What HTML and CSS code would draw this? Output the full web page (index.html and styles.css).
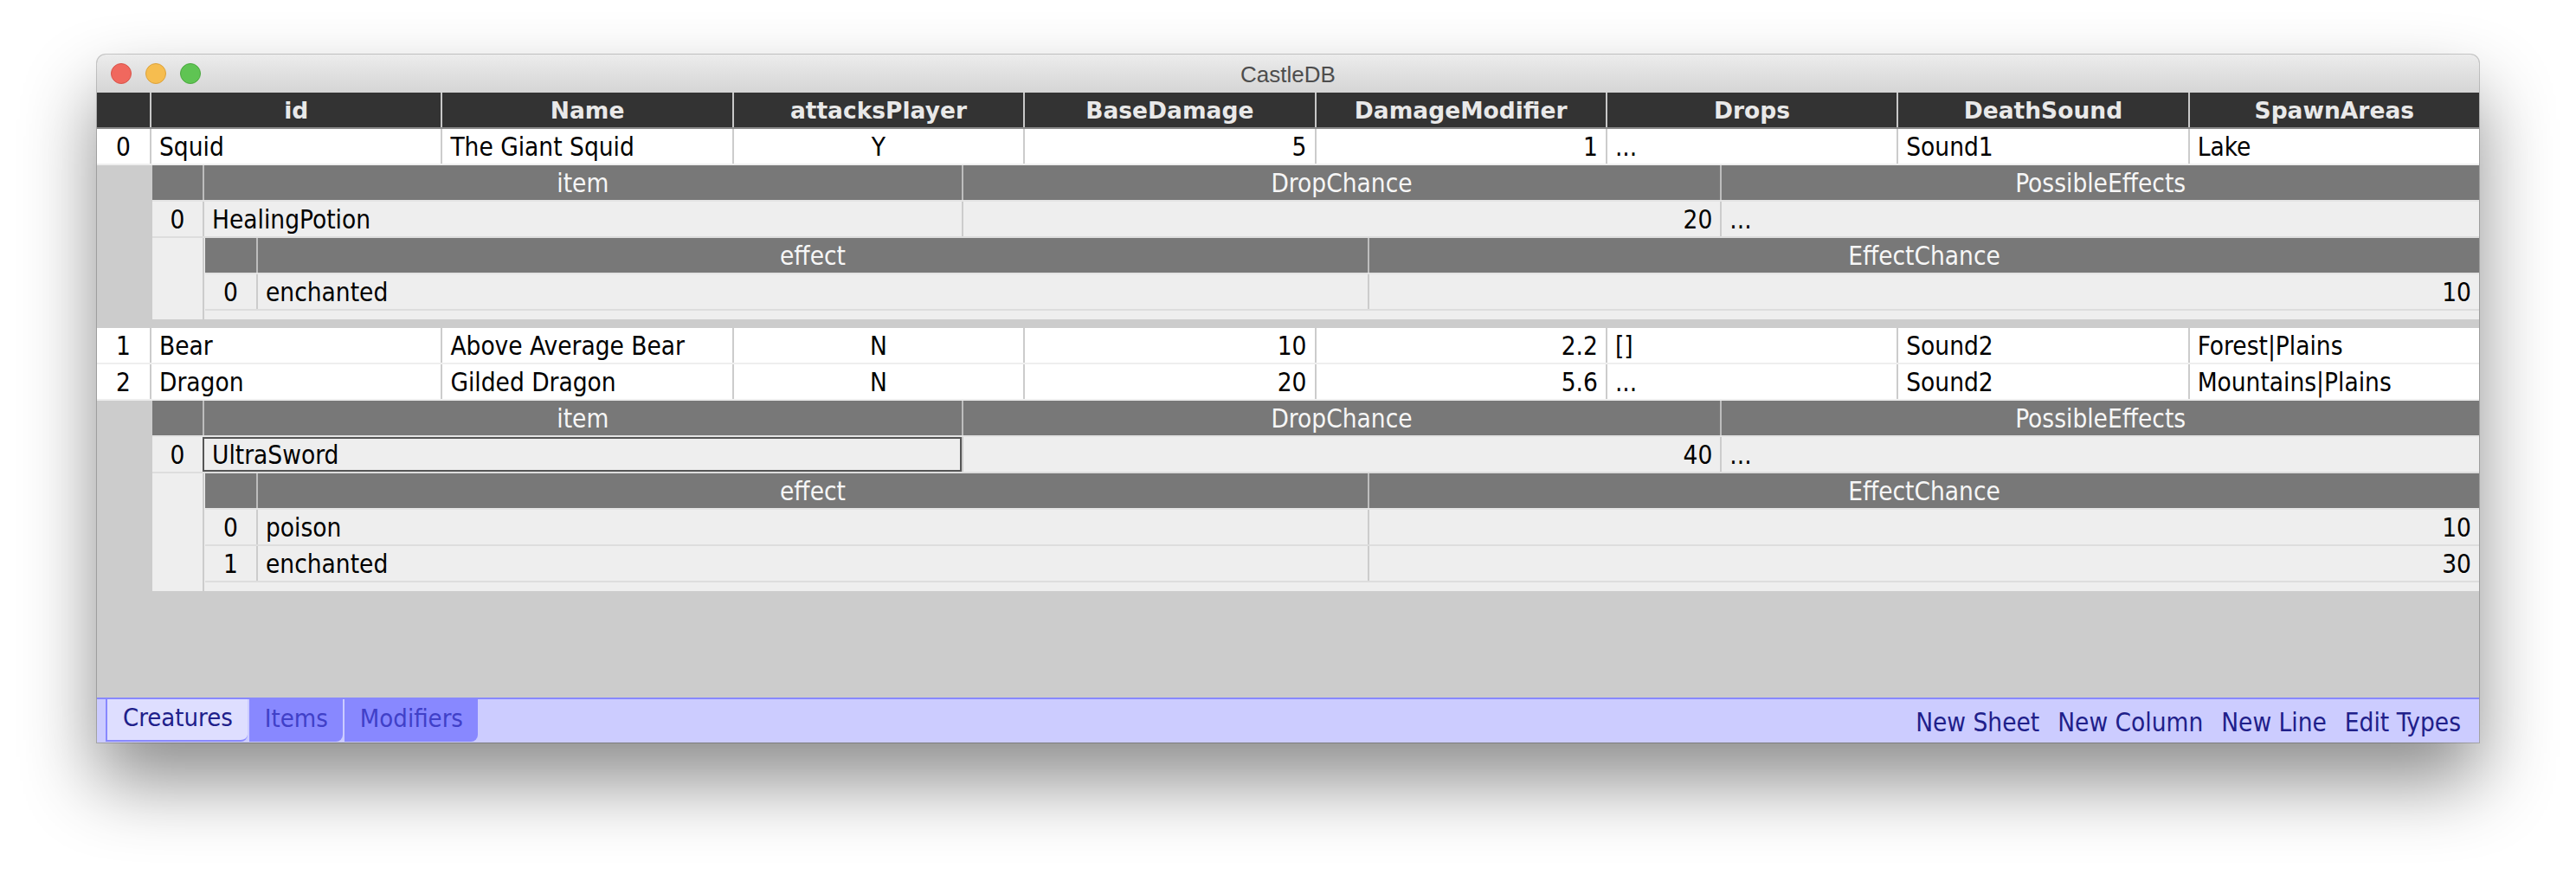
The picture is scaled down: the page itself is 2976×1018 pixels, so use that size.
FILE: index.html
```html
<!DOCTYPE html>
<html>
<head>
<meta charset="utf-8">
<title>CastleDB</title>
<link rel="stylesheet" href="styles.css">
</head>
<body>
<div class="window">
  <div class="titlebar">
    <div class="lights">
      <span class="light red"></span>
      <span class="light yellow"></span>
      <span class="light green"></span>
    </div>
    <div class="title">CastleDB</div>
    <div></div>
  </div>
  <div class="content">
    <div class="sheet">
      <div class="grid main head">
        <div class="c"></div>
        <div class="c ctr">id</div>
        <div class="c ctr">Name</div>
        <div class="c ctr">attacksPlayer</div>
        <div class="c ctr">BaseDamage</div>
        <div class="c ctr">DamageModifier</div>
        <div class="c ctr">Drops</div>
        <div class="c ctr">DeathSound</div>
        <div class="c ctr">SpawnAreas</div>
      </div>

      <div class="grid main row">
        <div class="c ctr">0</div>
        <div class="c">Squid</div>
        <div class="c">The Giant Squid</div>
        <div class="c ctr">Y</div>
        <div class="c num">5</div>
        <div class="c num">1</div>
        <div class="c">...</div>
        <div class="c">Sound1</div>
        <div class="c">Lake</div>
      </div>

      <div class="list gap">
        <div class="grid l1 subhead">
          <div class="c"></div>
          <div class="c ctr">item</div>
          <div class="c ctr">DropChance</div>
          <div class="c ctr">PossibleEffects</div>
        </div>
        <div class="grid l1 subrow">
          <div class="c ctr">0</div>
          <div class="c">HealingPotion</div>
          <div class="c num">20</div>
          <div class="c">...</div>
        </div>
        <div class="nest">
          <div class="nidx"></div>
          <div class="nbody">
            <div class="grid l2 subhead">
              <div class="c"></div>
              <div class="c ctr">effect</div>
              <div class="c ctr">EffectChance</div>
            </div>
            <div class="grid l2 subrow">
              <div class="c ctr">0</div>
              <div class="c">enchanted</div>
              <div class="c num">10</div>
            </div>
          </div>
        </div>
      </div>

      <div class="grid main row">
        <div class="c ctr">1</div>
        <div class="c">Bear</div>
        <div class="c">Above Average Bear</div>
        <div class="c ctr">N</div>
        <div class="c num">10</div>
        <div class="c num">2.2</div>
        <div class="c">[]</div>
        <div class="c">Sound2</div>
        <div class="c">Forest|Plains</div>
      </div>
      <div class="grid main row">
        <div class="c ctr">2</div>
        <div class="c">Dragon</div>
        <div class="c">Gilded Dragon</div>
        <div class="c ctr">N</div>
        <div class="c num">20</div>
        <div class="c num">5.6</div>
        <div class="c">...</div>
        <div class="c">Sound2</div>
        <div class="c">Mountains|Plains</div>
      </div>

      <div class="list">
        <div class="grid l1 subhead">
          <div class="c"></div>
          <div class="c ctr">item</div>
          <div class="c ctr">DropChance</div>
          <div class="c ctr">PossibleEffects</div>
        </div>
        <div class="grid l1 subrow">
          <div class="c ctr">0</div>
          <div class="c sel">UltraSword</div>
          <div class="c num">40</div>
          <div class="c">...</div>
        </div>
        <div class="nest">
          <div class="nidx"></div>
          <div class="nbody">
            <div class="grid l2 subhead">
              <div class="c"></div>
              <div class="c ctr">effect</div>
              <div class="c ctr">EffectChance</div>
            </div>
            <div class="grid l2 subrow">
              <div class="c ctr">0</div>
              <div class="c">poison</div>
              <div class="c num">10</div>
            </div>
            <div class="grid l2 subrow">
              <div class="c ctr">1</div>
              <div class="c">enchanted</div>
              <div class="c num">30</div>
            </div>
          </div>
        </div>
      </div>
    </div>

    <div class="footer">
      <div class="tabs">
        <div class="tab active">Creatures</div>
        <div class="tab">Items</div>
        <div class="tab">Modifiers</div>
      </div>
      <div class="links">
        <span class="link">New Sheet</span>
        <span class="link">New Column</span>
        <span class="link">New Line</span>
        <span class="link">Edit Types</span>
      </div>
    </div>
  </div>
</div>
</body>
</html>
```

FILE: styles.css
```css
* { box-sizing: border-box; }
html, body {
  margin: 0;
  padding: 0;
  background: #ffffff;
}
body {
  width: 2976px;
  height: 1018px;
  overflow: hidden;
  font-family: "DejaVu Sans Condensed", "DejaVu Sans", sans-serif;
  font-size: 29.5px;
  color: #000;
}

.window {
  margin: 63px 0 0 112px;
  width: 2752px;
  height: 795px;
  border-radius: 10px 10px 0 0;
  background: #cccccc;
  box-shadow: 0 0 0 1px rgba(0,0,0,0.2), 0 45px 85px rgba(0,0,0,0.45);
  display: flex;
  flex-direction: column;
  overflow: hidden;
}

/* title bar */
.titlebar {
  height: 44px;
  flex: none;
  display: grid;
  grid-template-columns: 1fr auto 1fr;
  align-items: center;
  background: linear-gradient(#ececec, #d5d5d5);
  border-radius: 10px 10px 0 0;
}
.lights {
  display: flex;
  gap: 16px;
  padding-left: 16px;
}
.light {
  width: 24px;
  height: 24px;
  border-radius: 50%;
  display: block;
}
.red { background: #f0685e; border: 1px solid #d8544a; }
.yellow { background: #f6bd4f; border: 1px solid #dba23c; }
.green { background: #5fc453; border: 1px solid #4aa83e; }
.title {
  font-family: "Liberation Sans", Arial, sans-serif;
  font-size: 26px;
  color: #4d4d4d;
  padding-top: 2px;
}

/* content */
.content {
  flex: 1;
  display: flex;
  flex-direction: column;
  min-height: 0;
}
.sheet {
  flex: 1;
}

.grid { display: grid; }
.main { grid-template-columns: 61px repeat(8, 1fr); }
.l1 { grid-template-columns: 58px repeat(3, 1fr); }
.l2 { grid-template-columns: 59px repeat(2, 1fr); }

.c {
  height: 40px;
  display: flex;
  align-items: center;
  padding: 1px 9px 0;
  white-space: nowrap;
  overflow: hidden;
}
.c + .c { border-left: 2px solid #cccccc; }
.ctr { justify-content: center; }
.num { justify-content: flex-end; }

.head {
  background: #333333;
  color: #e9e9e9;
  font-family: "DejaVu Sans", sans-serif;
  font-weight: bold;
  font-size: 26.5px;
  border-bottom: 2px solid #8a8a8a;
}
.head .c + .c { border-left-color: #c8c8c8; }

.row {
  background: #ffffff;
  border-bottom: 2px solid #eeeeee;
}

.list {
  margin-left: 64px;
}
.list.gap { margin-bottom: 10px; }

.subhead {
  background: #787878;
  color: #f6f6f6;
  border-bottom: 2px solid #e4e4e4;
}
.subhead .c + .c { border-left-color: #bdbdbd; }
.subrow {
  background: #eeeeee;
  border-bottom: 2px solid #dddddd;
}

.nest {
  display: flex;
  background: #eeeeee;
}
.nidx {
  width: 60px;
  flex: none;
  border-right: 2px solid #cccccc;
}
.nbody {
  flex: 1;
  padding: 0 0 10px 1px;
}

.sel {
  outline: 2px solid #555555;
  outline-offset: -2px;
}

/* footer */
.footer {
  height: 52px;
  flex: none;
  background: #ccccff;
  border-top: 2px solid #8888ff;
  display: flex;
  padding: 0 21px 0 10px;
}
.tabs {
  display: flex;
  gap: 2px;
  height: 49px;
}
.tab {
  display: flex;
  align-items: center;
  padding: 0 17px 6px 18px;
  background: #8888ff;
  color: #4040c8;
  font-size: 29px;
  border-bottom-right-radius: 8px;
}
.tab.active {
  background: #dedeff;
  color: #20208a;
  border-left: 2px solid #8888ff;
  border-bottom: 2px solid #8888ff;
}
.links {
  margin-left: auto;
  display: flex;
  align-items: center;
  gap: 21px;
  color: #20208a;
  font-size: 29.5px;
  padding-top: 3px;
}
```
